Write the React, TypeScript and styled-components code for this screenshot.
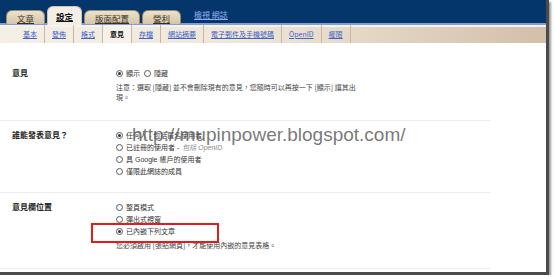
import { FC, ReactNode } from 'react';
import styled, { createGlobalStyle } from 'styled-components';

const GlobalStyle = createGlobalStyle`
  html, body {
    margin: 0;
    padding: 0;
    background: #fff;
  }
  body {
    font-family: "Liberation Sans", "Noto Sans CJK TC", sans-serif;
  }
`;

const Frame = styled.div`
  position: relative;
  width: 549px;
  height: 275px;
  box-sizing: border-box;
  background: #fff;
  border-right: 3px solid #4a4a4a;
  border-bottom: 3px solid #4a4a4a;
  box-shadow: 2px 2px 2px #9a9a9a;
  overflow: hidden;
`;

const TopBar = styled.div`
  height: 25px;
  box-sizing: border-box;
  background: #05366b;
  box-shadow: inset 0 -2px 0 #819fd3;
  display: flex;
  align-items: flex-end;
  padding-left: 6px;
  gap: 2px;
`;

const Tab = styled.a<{ $active?: boolean }>`
  display: flex;
  align-items: center;
  box-sizing: border-box;
  height: ${(p) => (p.$active ? '19px' : '14px')};
  margin-bottom: ${(p) => (p.$active ? '0' : '1px')};
  padding: 0 ${(p) => (p.$active ? '8px' : '10px')};
  border: 1px solid ${(p) => (p.$active ? '#cfc3ae' : '#9d8a6a')};
  border-bottom: none;
  border-radius: 6px 6px 0 0;
  background: ${(p) => (p.$active ? '#f4efe6' : 'linear-gradient(#ece2d0, #d6c5a8)')};
  color: ${(p) => (p.$active ? '#111' : '#3a3020')};
  font-family: "Noto Sans CJK TC", sans-serif;
  font-size: 8.5px;
  font-weight: ${(p) => (p.$active ? 'bold' : 'normal')};
  text-decoration: underline;
  position: relative;
  z-index: 1;
`;

const ViewLink = styled.a`
  margin-left: 11px;
  margin-bottom: 5px;
  color: #8fb0f2;
  font-family: "Noto Sans CJK TC", sans-serif;
  font-size: 8px;
  text-decoration: underline;
`;

const SubNav = styled.div`
  height: 18px;
  display: flex;
  align-items: stretch;
  padding-left: 16px;
  background: linear-gradient(90deg, #f5efe6 0%, #efe6d8 45%, #d3bfaa 100%);
  box-shadow: inset 0 2px 0 #f8f3ea;
`;

const SubItem = styled.a<{ $active?: boolean }>`
  display: flex;
  align-items: center;
  padding: 0 7px;
  border-right: 1px solid #c9b79f;
  font-family: "Noto Sans CJK TC", sans-serif;
  font-size: 7px;
  color: ${(p) => (p.$active ? '#111' : '#3d63c8')};
  font-weight: ${(p) => (p.$active ? 'bold' : 'normal')};
  text-decoration: ${(p) => (p.$active ? 'none' : 'underline')};
  background: ${(p) => (p.$active ? 'rgba(255,255,255,0.35)' : 'transparent')};
`;

const Content = styled.div`
  width: 490px;
  padding-top: 16px;
`;

const Row = styled.div<{ $top: number; $bottom: number }>`
  display: flex;
  padding: ${(p) => p.$top}px 0 ${(p) => p.$bottom}px;
  border-bottom: 1px solid #ececec;
`;

const Label = styled.div`
  width: 116px;
  box-sizing: border-box;
  padding-left: 12px;
  line-height: 12px;
  font-family: "Noto Sans CJK TC", sans-serif;
  font-size: 8px;
  font-weight: bold;
  color: #222;
`;

const Values = styled.div`
  display: flex;
  flex-direction: column;
`;

const OptionLine = styled.div`
  display: flex;
  align-items: center;
  height: 12px;
`;

const Option = styled.label`
  display: flex;
  align-items: center;
  margin-right: 4px;
  font-family: "Liberation Sans", "Noto Sans CJK TC", sans-serif;
  font-size: 7px;
  color: #333;
`;

const Radio = styled.span<{ $checked?: boolean }>`
  width: 7px;
  height: 7px;
  box-sizing: border-box;
  border: 1px solid #5a5a5a;
  border-radius: 50%;
  margin-right: 3px;
  display: flex;
  align-items: center;
  justify-content: center;
  &::after {
    content: '';
    width: 3px;
    height: 3px;
    border-radius: 50%;
    background: ${(p) => (p.$checked ? '#333' : 'transparent')};
  }
`;

const Hint = styled.em`
  color: #8a8a8a;
  margin-left: 3px;
`;

const Note = styled.p`
  margin: 4px 0 0;
  width: 240px;
  line-height: 9.5px;
  font-family: "Noto Sans CJK TC", sans-serif;
  font-size: 7px;
  color: #444;
`;

const Watermark = styled.div`
  position: absolute;
  left: 132px;
  top: 125px;
  font-family: "Liberation Sans", sans-serif;
  font-size: 19px;
  line-height: 19px;
  color: rgba(95, 95, 95, 0.85);
  pointer-events: none;
`;

const Highlight = styled.div`
  position: absolute;
  left: 91px;
  top: 223px;
  width: 128px;
  height: 20px;
  box-sizing: border-box;
  border: 2px solid #e21b1d;
`;

const Choice: FC<{ checked?: boolean; children: ReactNode }> = ({ checked, children }) => (
  <Option>
    <Radio $checked={checked} />
    {children}
  </Option>
);

const tabs = ['文章', '設定', '版面配置', '營利'];
const subTabs = ['基本', '發佈', '格式', '意見', '存檔', '網站摘要', '電子郵件及手機號碼', 'OpenID', '權限'];

const App: FC = () => (
  <>
    <GlobalStyle />
    <Frame>
      <TopBar>
        {tabs.map((t) => (
          <Tab key={t} $active={t === '設定'}>
            {t}
          </Tab>
        ))}
        <ViewLink>檢視 網誌</ViewLink>
      </TopBar>
      <SubNav>
        {subTabs.map((t) => (
          <SubItem key={t} $active={t === '意見'}>
            {t}
          </SubItem>
        ))}
      </SubNav>
      <Content>
        <Row $top={8} $bottom={18}>
          <Label>意見</Label>
          <Values>
            <OptionLine>
              <Choice checked>顯示</Choice>
              <Choice>隱藏</Choice>
            </OptionLine>
            <Note>注意：選取 [隱藏] 並不會刪除現有的意見，您隨時可以再按一下 [顯示] 讓其出現。</Note>
          </Values>
        </Row>
        <Row $top={8} $bottom={15}>
          <Label>誰能發表意見？</Label>
          <Values>
            <OptionLine>
              <Choice checked>任何人 - 包括匿名使用者</Choice>
            </OptionLine>
            <OptionLine>
              <Choice>
                已註冊的使用者 -<Hint>包括 OpenID</Hint>
              </Choice>
            </OptionLine>
            <OptionLine>
              <Choice>具 Google 帳戶的使用者</Choice>
            </OptionLine>
            <OptionLine>
              <Choice>僅限此網誌的成員</Choice>
            </OptionLine>
          </Values>
        </Row>
        <Row $top={8} $bottom={17}>
          <Label>意見欄位置</Label>
          <Values>
            <OptionLine>
              <Choice>整頁模式</Choice>
            </OptionLine>
            <OptionLine>
              <Choice>彈出式視窗</Choice>
            </OptionLine>
            <OptionLine>
              <Choice checked>已內嵌下列文章</Choice>
            </OptionLine>
            <Note>您必須啟用 [張貼網頁]，才能使用內嵌的意見表格。</Note>
          </Values>
        </Row>
      </Content>
      <Watermark>http://mupinpower.blogspot.com/</Watermark>
      <Highlight />
    </Frame>
  </>
);

export default App;
